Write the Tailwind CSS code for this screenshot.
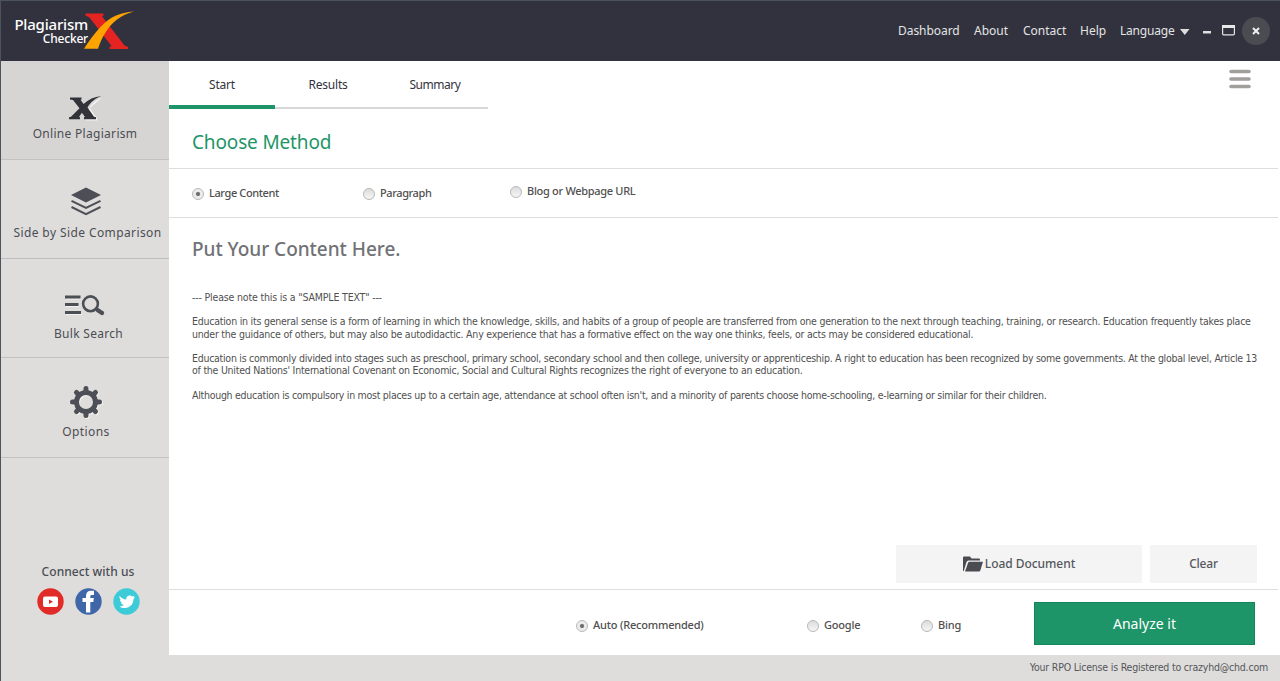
<!DOCTYPE html>
<html lang="en">
<head>
    <meta charset="UTF-8">
    <meta name="viewport" content="width=device-width, initial-scale=1.0">
    <title>Plagiarism Checker X</title>
    <script src="https://cdn.jsdelivr.net/npm/@tailwindcss/browser@4"></script>
    <style>
        body {
            font-family: 'Noto Sans', sans-serif;
        }
        .tahoma {
            font-family: Tahoma, 'DejaVu Sans Condensed', 'DejaVu Sans', sans-serif;
            font-stretch: condensed;
        }
        .radio {
            width: 12px;
            height: 12px;
            flex: none;
            border: 1px solid #b8b8b8;
            border-radius: 50%;
            background: linear-gradient(#dcdcdc, #f6f6f6);
        }
        .radio.on {
            background: radial-gradient(circle, #666 0, #777 1.6px, #ececec 2.6px);
        }
    </style>
</head>
<body>
<div class="flex flex-col w-[1280px] h-[681px] overflow-hidden bg-[#dedddb] border-l border-t border-[#4d535c] whitespace-nowrap">
    <!-- Header -->
    <header class="flex justify-between h-[60px] flex-none bg-[#31323e] text-[#e4e4e4]">
        <div class="flex">
            <div class="w-[87px] pt-[15px] text-right text-white font-medium">
                <div class="text-[15px] leading-[17px] tracking-[-0.2px]">Plagiarism</div>
                <div class="text-[12px] leading-[11px] tracking-[-0.2px]">Checker</div>
            </div>
            <svg class="-ml-[4px] mt-[10px]" width="50" height="39" viewBox="0 0 50 39">
                <path fill="#e52421" d="M1.500 2.500h18v2l-1.500.7L40.500 34.500l3.500 1.500v2H25.500v-2l2-1L5.500 6.500 1.500 4.500z"/>
                <path fill="#fda400" d="M50 .5C36.500 4 28 11 21.500 21.500c-3.500 5.500-5.500 10.500-7.500 16.300H0C5 30 10 23 17 15.500 26 6 35.500 1.500 50 .5z"/>
            </svg>
        </div>
        <nav class="flex items-center text-[12px] pr-[10px]">
            <a class="w-[76px] tracking-[-0.05px]">Dashboard</a>
            <a class="w-[49px]">About</a>
            <a class="w-[57px]">Contact</a>
            <a class="w-[40px]">Help</a>
            <a class="w-[60px] tracking-[-0.2px]">Language</a>
            <svg class="-ml-[1px]" width="44" height="20" viewBox="0 0 44 20">
                <path fill="#dedede" d="M1 8h9.500L5.800 14zM24 10h8v2.500h-8z"/>
            </svg>
            <svg class="-ml-[1px]" width="13" height="12" viewBox="0 0 13 12">
                <rect x=".6" y=".6" width="11.800" height="9.200" rx="1" fill="none" stroke="#e6e6e6" stroke-width="1.200"/>
                <path fill="#e6e6e6" d="M0 0h13v3H0z"/>
            </svg>
            <div class="ml-[7px] size-[28px] rounded-full bg-[#4a4c52] flex items-center justify-center">
                <svg width="8" height="8" viewBox="0 0 8 8"><path fill="none" stroke="#f0f0f0" stroke-width="2" d="M1 1l6 6M7 1L1 7"/></svg>
            </div>
        </nav>
    </header>

    <div class="flex h-[594px] flex-none">
        <!-- Sidebar -->
        <aside class="w-[168px] flex-none text-[12px] leading-[16px] text-[#4b4d54] tracking-[0.4px]">
            <div class="h-[99px] bg-[#d6d5d3] border-b border-[#c3c2c1] flex flex-col items-center pt-[34px]">
                <svg width="34" height="26" viewBox="0 0 34 26">
                    <path fill="#f4f4f4" d="M34 2.500C28 5 24 8 21.500 12.500l7.500 11v2H17.500v-2l-3-4z"/>
                    <path fill="#323339" d="M2 2.500h11.500v2l-1 .3 3 4.200C20.500 4.500 26 1.800 33.500 1 27 3.500 22.500 7 19.500 12.500L26 21.700l2 .6v2H16v-2l.9-.3-3-4.300L11 22l1 .3v2H1v-2l2-.5 8.500-8.600L5 5 2 4.500z"/>
                </svg>
                <div class="mt-[5px] tracking-[0.3px]">Online Plagiarism</div>
            </div>
            <div class="h-[99px] border-b border-[#bdbcc0] flex flex-col items-center pt-[27px]">
                <svg class="ml-[2px]" width="32" height="30" viewBox="0 0 32 30">
                    <path fill="#4d4f56" d="M16 .5L31 8 16 15.500 1 8z"/>
                    <path fill="none" stroke="#4d4f56" stroke-width="2" d="M1.500 13.800L16 21l14.500-7.200M1.500 20L16 27.200 30.500 20"/>
                </svg>
                <div class="mt-[8px] ml-[5px]">Side by Side Comparison</div>
            </div>
            <div class="h-[99px] border-b border-[#c3c2c1] flex flex-col items-center pt-[35px]">
                <svg width="40" height="22" viewBox="0 0 40 22">
                    <path fill="none" stroke="#f2f2f2" stroke-width="1" d="M1 5h15M1 12.500h13M1 20.500h16"/>
                    <path fill="none" stroke="#4d4f56" stroke-width="2.800" d="M0 3h15.500M0 10.500h13.500M0 18.500h16"/>
                    <circle cx="25.500" cy="9.800" r="7.400" fill="none" stroke="#4d4f56" stroke-width="2.600"/>
                    <path stroke="#4d4f56" stroke-width="4.200" stroke-linecap="round" d="M32.500 16l4.500 3"/>
                </svg>
                <div class="mt-[10px] ml-[7px] tracking-[0.3px]">Bulk Search</div>
            </div>
            <div class="h-[100px] border-b border-[#c3c2c1] flex flex-col items-center pt-[27px]">
                <svg class="ml-[2px]" width="34" height="34" viewBox="-17 -17 34 34">
                    <g fill="none" stroke="#f4f4f4" transform="translate(1 1)">
                        <circle r="9.500" stroke-width="5"/>
                        <path stroke-width="5" stroke-linecap="round" d="M0-13.500V-11M0 13.500V11M-13.500 0H-11M13.500 0H11M-9.500-9.500l2 2M9.500 9.500l-2-2M-9.500 9.500l2-2M9.500-9.500l-2 2"/>
                    </g>
                    <g fill="none" stroke="#4d4f56">
                        <circle r="9.500" stroke-width="5"/>
                        <path stroke-width="5" stroke-linecap="round" d="M0-13.500V-11M0 13.500V11M-13.500 0H-11M13.500 0H11M-9.500-9.500l2 2M9.500 9.500l-2-2M-9.500 9.500l2-2M9.500-9.500l-2 2"/>
                    </g>
                </svg>
                <div class="mt-[5px] ml-[2px]">Options</div>
            </div>
            <div class="pt-[106px] flex flex-col items-center">
                <div class="ml-[6px] font-medium tracking-[0.05px]">Connect with us</div>
                <div class="flex gap-[11px] mt-[8px] ml-[7px]">
                    <svg width="27" height="27" viewBox="0 0 27 27">
                        <circle cx="13.500" cy="13.500" r="13.200" fill="#e12b28"/>
                        <rect x="6" y="8.500" width="15" height="10.500" rx="2" fill="#fff"/>
                        <path fill="#e12b28" d="M12 11.500l4 2.200-4 2.300z"/>
                    </svg>
                    <svg width="27" height="27" viewBox="0 0 27 27">
                        <circle cx="13.500" cy="13.500" r="13.200" fill="#3f66a8"/>
                        <path fill="#fff" d="M11 24.500V14H7.500v-4H11V8c0-3.500 2-5.200 5-5.200h3V7h-2c-1.300 0-1.700.6-1.700 1.700V10h3.500l-.5 4h-3v10.500z"/>
                    </svg>
                    <svg width="27" height="27" viewBox="0 0 27 27">
                        <circle cx="13.500" cy="13.500" r="13.200" fill="#3dcbd8"/>
                        <path fill="#fff" d="M6.500 8c2 2.300 4.200 3.300 6.800 3.400-.3-2.400 1.400-4 3.400-4 1 0 1.900.4 2.500 1.100l2-.8-.8 1.700 1.900-.2-1.800 1.900c0 5-3.500 8.800-8.500 8.800-2.200 0-4-.5-5.500-1.500 2 .1 3.300-.4 4.500-1.400-1.600-.2-2.500-1-3-2.300h1.300C7.700 14.200 7 13 7 11.500l1.300.3C6.700 10.700 6 9.500 6.500 8z"/>
                    </svg>
                </div>
            </div>
        </aside>

        <!-- Main content -->
        <main class="flex-1 min-w-0 bg-white flex flex-col text-[#505050]">
            <div class="flex justify-between h-[48px] flex-none">
                <div class="flex text-[12px] text-[#33333d] text-center leading-[48px]">
                    <div class="w-[106px] border-b-4 border-[#1e9568] tracking-[-0.2px]">Start</div>
                    <div class="w-[106px] border-b-2 border-[#d8d8d8] tracking-[-0.2px]">Results</div>
                    <div class="w-[107px] border-b-2 border-[#d8d8d8] pl-[1px] tracking-[-0.45px]">Summary</div>
                </div>
                <svg class="mt-[8px] mr-[29px]" width="22" height="20" viewBox="0 0 22 20">
                    <path stroke="#a19f9c" stroke-width="3.600" stroke-linecap="round" d="M2 2.500h18M2 10h18M2 17.500h18"/>
                </svg>
            </div>
            <h1 class="h-[60px] mr-[2px] border-b border-[#dedede] pl-[23px] pt-[19px] text-[19px] leading-[28px] tracking-[-0.15px] text-[#1e9568]">Choose Method</h1>
            <div class="h-[49px] mr-[2px] border-b border-[#dedede] flex pl-[23px] text-[11px] leading-[16px] font-medium tracking-[-0.4px]">
                <div class="w-[171px] flex gap-[5px] pt-[16px]"><span class="radio on mt-[3px]"></span>Large Content</div>
                <div class="w-[147px] flex gap-[5px] pt-[16px]"><span class="radio mt-[3px]"></span>Paragraph</div>
                <div class="flex gap-[5px] pt-[14px] tracking-[-0.3px]"><span class="radio mt-[3px]"></span>Blog or Webpage URL</div>
            </div>
            <h2 class="pl-[23px] pt-[17px] text-[19px] leading-[28px] font-medium tracking-[-0.03px] text-[#707276]">Put Your Content Here.</h2>
            <div class="tahoma pl-[23px] pt-[28px] h-[282px] text-[10.5px] leading-[12.2px]">
                <p class="mb-[12.2px] tracking-[-0.17px]">--- Please note this is a "SAMPLE TEXT" ---</p>
                <p class="tracking-[-0.235px]">Education in its general sense is a form of learning in which the knowledge, skills, and habits of a group of people are transferred from one generation to the next through teaching, training, or research. Education frequently takes place</p>
                <p class="mb-[12.2px] tracking-[-0.22px]">under the guidance of others, but may also be autodidactic. Any experience that has a formative effect on the way one thinks, feels, or acts may be considered educational.</p>
                <p class="tracking-[-0.27px]">Education is commonly divided into stages such as preschool, primary school, secondary school and then college, university or apprenticeship. A right to education has been recognized by some governments. At the global level, Article 13</p>
                <p class="mb-[12.2px] tracking-[-0.24px]">of the United Nations' International Covenant on Economic, Social and Cultural Rights recognizes the right of everyone to an education.</p>
                <p class="tracking-[-0.275px]">Although education is compulsory in most places up to a certain age, attendance at school often isn't, and a minority of parents choose home-schooling, e-learning or similar for their children.</p>
            </div>
            <div class="flex justify-end gap-[8px] pr-[23px] h-[44px] flex-none text-[12px] font-medium tracking-[-0.05px] text-[#54575c]">
                <button class="w-[246px] h-[38px] bg-[#f4f4f4] flex items-center justify-center gap-[2px]">
                    <svg width="20" height="16" viewBox="0 0 20 16">
                        <path fill="#4b4c52" d="M0 15V1.500Q0 .5 1 .5h6l1.500 2H16q1 0 1 1V4.500H5.500Q4 4.500 3.500 6L.8 15zM2 15.500L5 7q.4-1.300 1.700-1.300H20L17.300 14.500q-.3 1-1.300 1z"/>
                    </svg>
                    Load Document
                </button>
                <button class="w-[107px] h-[38px] bg-[#f4f4f4] tracking-[-0.2px]">Clear</button>
            </div>
            <div class="flex-1 mr-[2px] border-t border-[#dedede] flex text-[11px] leading-[16px] font-medium tracking-[-0.2px] pl-[407px]">
                <div class="w-[231px] flex gap-[5px] pt-[27px]"><span class="radio on mt-[3px]"></span>Auto (Recommended)</div>
                <div class="w-[114px] flex gap-[5px] pt-[27px]"><span class="radio mt-[3px]"></span>Google</div>
                <div class="w-[113px] flex gap-[5px] pt-[27px]"><span class="radio mt-[3px]"></span>Bing</div>
                <button class="mt-[12px] w-[221px] h-[43px] bg-[#1e9568] border border-[#118658] text-white text-[14px] font-normal tracking-normal">Analyze it</button>
            </div>
        </main>
    </div>

    <!-- License line -->
    <footer class="tahoma flex-1 pr-[12px] text-right text-[10.5px] leading-[24px] tracking-[-0.2px] text-[#55565a]">Your RPO License is Registered to crazyhd@chd.com</footer>
</div>
</body>
</html>
